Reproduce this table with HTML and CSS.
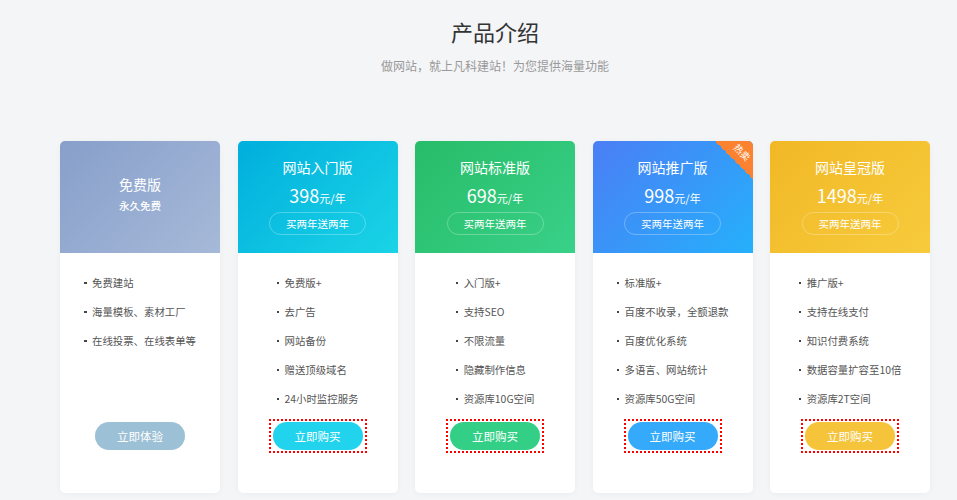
FILE: index.html
```html
<!DOCTYPE html>
<html lang="zh-CN">
<head>
<meta charset="utf-8">
<title>产品介绍</title>
<link rel="stylesheet" href="styles.css">
</head>
<body>
<div class="page">
  <div class="intro">
    <h1 class="title">产品介绍</h1>
    <p class="subtitle">做网站，就上凡科建站！为您提供海量功能</p>
  </div>
  <div class="plans">
    <div class="card">
      <div class="head head-free">
        <div class="name">免费版</div>
        <div class="free-sub">永久免费</div>
      </div>
      <div class="body">
        <ul class="features">
          <li>免费建站</li>
          <li>海量模板、素材工厂</li>
          <li>在线投票、在线表单等</li>
        </ul>
        <div class="action"><span class="btn btn-free">立即体验</span></div>
      </div>
    </div>
    <div class="card">
      <div class="head head-cyan">
        <div class="name">网站入门版</div>
        <div class="price"><span class="num">398</span><span class="unit">元/年</span></div>
        <div class="promo">买两年送两年</div>
      </div>
      <div class="body">
        <ul class="features">
          <li>免费版+</li>
          <li>去广告</li>
          <li>网站备份</li>
          <li>赠送顶级域名</li>
          <li>24小时监控服务</li>
        </ul>
        <div class="action focus"><span class="btn btn-cyan">立即购买</span></div>
      </div>
    </div>
    <div class="card">
      <div class="head head-green">
        <div class="name">网站标准版</div>
        <div class="price"><span class="num">698</span><span class="unit">元/年</span></div>
        <div class="promo">买两年送两年</div>
      </div>
      <div class="body">
        <ul class="features">
          <li>入门版+</li>
          <li>支持SEO</li>
          <li>不限流量</li>
          <li>隐藏制作信息</li>
          <li>资源库10G空间</li>
        </ul>
        <div class="action focus"><span class="btn btn-green">立即购买</span></div>
      </div>
    </div>
    <div class="card">
      <div class="head head-blue">
        <div class="name">网站推广版</div>
        <div class="price"><span class="num">998</span><span class="unit">元/年</span></div>
        <div class="promo">买两年送两年</div>
        <div class="hot"><span class="hot-text">热卖</span></div>
      </div>
      <div class="body">
        <ul class="features">
          <li>标准版+</li>
          <li>百度不收录，全额退款</li>
          <li>百度优化系统</li>
          <li>多语言、网站统计</li>
          <li>资源库50G空间</li>
        </ul>
        <div class="action focus"><span class="btn btn-blue">立即购买</span></div>
      </div>
    </div>
    <div class="card">
      <div class="head head-gold">
        <div class="name">网站皇冠版</div>
        <div class="price"><span class="num">1498</span><span class="unit">元/年</span></div>
        <div class="promo">买两年送两年</div>
      </div>
      <div class="body">
        <ul class="features">
          <li>推广版+</li>
          <li>支持在线支付</li>
          <li>知识付费系统</li>
          <li>数据容量扩容至10倍</li>
          <li>资源库2T空间</li>
        </ul>
        <div class="action focus"><span class="btn btn-gold">立即购买</span></div>
      </div>
    </div>
  </div>
</div>
</body>
</html>
```
FILE: styles.css
```css
* { box-sizing: border-box; }
html, body { margin: 0; padding: 0; }
body {
  background: #f4f5f7;
  font-family: "Noto Sans CJK SC", "Noto Sans", "Liberation Sans", sans-serif;
  color: #333;
  width: 957px;
  height: 500px;
  overflow: hidden;
}
.page { padding-top: 15px; }
.intro {
  width: 870px;
  margin-left: 60px;
  text-align: center;
}
.title {
  margin: 0;
  font-size: 22px;
  font-weight: 400;
  line-height: 32px;
  color: #333;
}
.subtitle {
  margin: 10px 0 0;
  font-size: 12px;
  line-height: 17px;
  color: #999;
}
.plans {
  display: flex;
  gap: 17.5px;
  width: 870px;
  margin: 67px 0 0 60px;
}
.card {
  width: 160px;
  height: 352px;
  background: #fff;
  border-radius: 5px;
  overflow: hidden;
  box-shadow: 0 1px 6px rgba(0, 0, 0, 0.04);
  display: flex;
  flex-direction: column;
}
.head {
  position: relative;
  height: 112px;
  color: #fff;
  text-align: center;
  padding-top: 16px;
  display: flex;
  flex-direction: column;
  align-items: center;
  overflow: hidden;
}
.head-free {
  background: linear-gradient(135deg, #879fca 0%, #a6b9d8 100%);
  justify-content: center;
  padding-top: 0;
  padding-bottom: 6px;
}
.head-cyan { background: linear-gradient(135deg, #00afdd 0%, #1bd4e6 100%); }
.head-green { background: linear-gradient(135deg, #27bc68 0%, #39d189 100%); }
.head-blue { background: linear-gradient(135deg, #4b7ef5 0%, #25b0fb 100%); }
.head-gold { background: linear-gradient(135deg, #f1b826 0%, #f7cb3c 100%); }
.name {
  font-size: 14px;
  line-height: 20px;
}
.free-sub {
  margin-top: 4px;
  font-size: 10.5px;
  line-height: 16px;
  font-weight: 500;
}
.price {
  margin-top: 6px;
  line-height: 24px;
  height: 24px;
}
.num { font-size: 18px; }
.unit { font-size: 11px; }
.promo {
  margin-top: 5px;
  width: 97px;
  height: 23px;
  line-height: 21px;
  border: 1px solid rgba(255, 255, 255, 0.28);
  border-radius: 12px;
  font-size: 10.5px;
}
.hot {
  position: absolute;
  top: 0;
  right: 0;
  width: 38px;
  height: 38px;
  background: linear-gradient(to bottom left, #fa8231 50%, rgba(250, 130, 49, 0) 50%);
}
.hot-text {
  position: absolute;
  top: 6px;
  left: 15px;
  width: 24px;
  font-size: 9.5px;
  line-height: 11px;
  text-align: center;
  transform: rotate(45deg);
  color: #fff;
  white-space: nowrap;
}
.body {
  flex: 1;
  display: flex;
  flex-direction: column;
  align-items: center;
  padding-top: 15px;
}
.features {
  list-style: none;
  margin: 0;
  padding: 0;
  height: 145px;
}
.features li {
  position: relative;
  padding-left: 8px;
  font-size: 10.4px;
  line-height: 29px;
  height: 29px;
  color: #555;
  white-space: nowrap;
}
.features li::before {
  content: "";
  position: absolute;
  left: 0;
  top: 13.5px;
  width: 2.5px;
  height: 2.5px;
  background: #444;
}
.action {
  margin-top: 6px;
  padding: 1px 2px;
  border: 2px solid transparent;
}
.action.focus {
  border: 2px dotted #f00;
}
.btn {
  display: block;
  width: 90px;
  height: 28px;
  line-height: 28px;
  border-radius: 14px;
  text-align: center;
  font-size: 11.5px;
  color: #fff;
}
.btn-free { background: #9cc0d5; }
.btn-cyan { background: #22d3ee; }
.btn-green { background: #33cf86; }
.btn-blue { background: #35aafa; }
.btn-gold { background: #f5c43a; }
```
